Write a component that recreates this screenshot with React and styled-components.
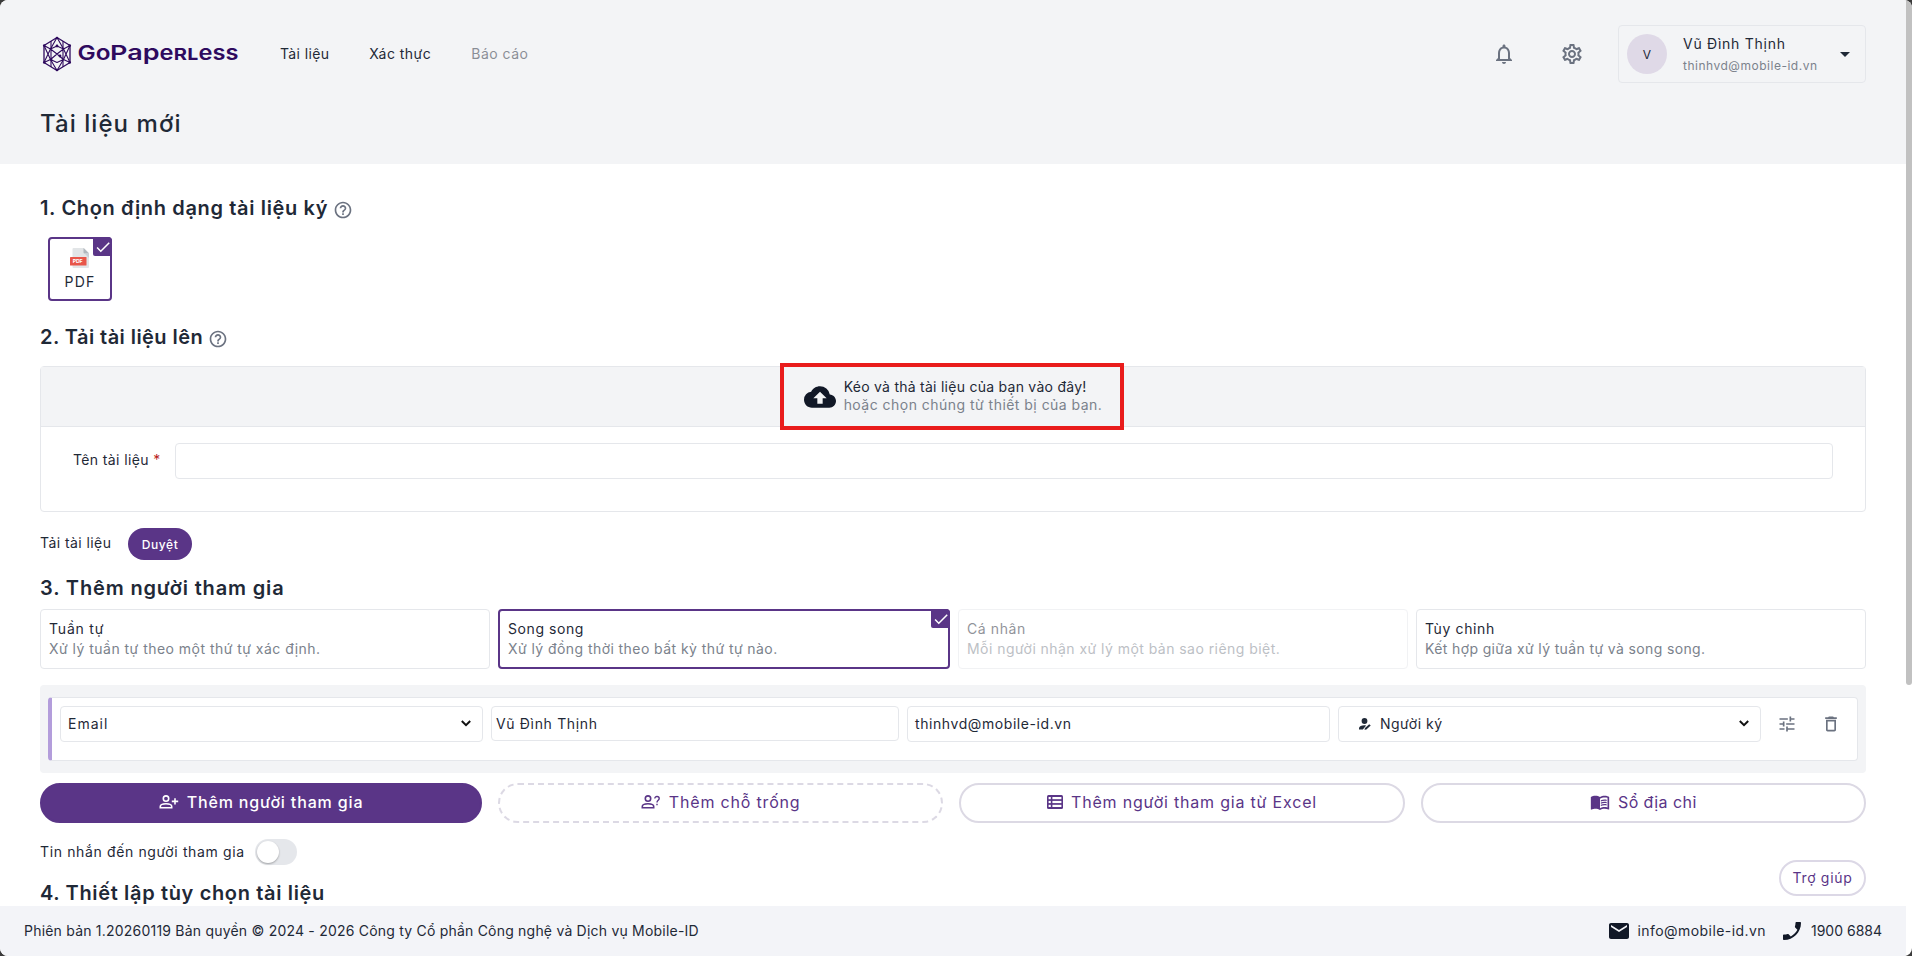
import React, { useState } from "react";
import styled, { createGlobalStyle } from "styled-components";
import {
    MdOutlineNotifications,
    MdOutlineSettings,
    MdArrowDropDown,
    MdHelpOutline,
    MdCheck,
    MdCloudUpload,
    MdTune,
    MdDeleteOutline,
    MdEmail,
    MdPhone,
    MdMenuBook,
} from "react-icons/md";

const navItems = [
    { label: "Tài liệu", spacing: 0.36 },
    { label: "Xác thực", spacing: 0.48 },
    { label: "Báo cáo", spacing: 0.48, disabled: true },
]

const flows = [
    { id: "sequential", title: "Tuần tự", titleSpacing: 0.8, text: "Xử lý tuần tự theo một thứ tự xác định.", spacing: 0.47 },
    { id: "parallel", title: "Song song", titleSpacing: 0.58, text: "Xử lý đồng thời theo bất kỳ thứ tự nào.", spacing: 0.43 },
    { id: "individual", title: "Cá nhân", titleSpacing: 0.6, text: "Mỗi người nhận xử lý một bản sao riêng biệt.", spacing: 0.45, disabled: true },
    { id: "custom", title: "Tùy chỉnh", titleSpacing: 0.62, text: "Kết hợp giữa xử lý tuần tự và song song.", spacing: 0.37 },
]

const LogoMark = () => (
    <svg width="34" height="36" viewBox="0 0 34 36" fill="none" stroke="#2e0a5e" strokeWidth="1.1" strokeLinejoin="round">
        <path d="M17 1.5 30 9.5V26.5L17 34.5 4 26.5V9.5Z" strokeWidth="1.3" />
        <path d="M17 1.5 10.5 13 4 9.5M17 1.5 23.5 13 30 9.5M10.5 13 4 26.5M23.5 13 30 26.5M4 9.5 10.5 23.5 17 34.5 23.5 23.5 30 9.5M4 26.5 10.5 23.5M30 26.5 23.5 23.5" />
        <path d="M11 5V31M23 5V31M10.5 13 17 10 23.5 13 17 18ZM10.5 23.5 17 18 23.5 23.5 17 26.5Z" />
        <g fill="#2e0a5e" stroke="none">
            <circle cx="17" cy="2" r="1.2" />
            <circle cx="4.2" cy="9.5" r="1.2" />
            <circle cx="29.8" cy="9.5" r="1.2" />
            <circle cx="4.2" cy="26.5" r="1.2" />
            <circle cx="29.8" cy="26.5" r="1.2" />
            <circle cx="17" cy="34" r="1.2" />
            <circle cx="17" cy="10" r="1.4" />
            <circle cx="20" cy="20" r="1.4" />
            <circle cx="11" cy="23.5" r="1.2" />
        </g>
    </svg>
)

const PdfIcon = () => (
    <svg width="20" height="20" viewBox="0 0 20 20">
        <path d="M3.5 0H14l5 5v14a1 1 0 0 1-1 1H3.5a1 1 0 0 1-1-1V1a1 1 0 0 1 1-1Z" fill="#e2e5e7" />
        <path d="M13.5 0 19 5.5H14.5a1 1 0 0 1-1-1Z" fill="#b0b7bd" />
        <path d="M14.5 5.5H19V10Z" fill="#cad1d8" />
        <rect x="0" y="9" width="16.5" height="8.5" rx=".6" fill="#e8564a" />
        <text x="8.2" y="15.3" fontSize="5.2" fontWeight="700" fill="#fff" textAnchor="middle" textLength="11">PDF</text>
    </svg>
)

const PersonIcon = ({ children }) => (
    <svg width="20" height="16" viewBox="0 0 20 16" fill="none" stroke="currentColor" strokeWidth="1.6">
        <circle cx="7" cy="4.6" r="2.7" />
        <path d="M1.3 13.7V12.5C1.3 10.7 4.4 9.8 7 9.8S12.7 10.7 12.7 12.5V13.7Z" />
        {children}
    </svg>
)

const TableIcon = () => (
    <svg width="16" height="14" viewBox="0 0 16 14">
        <rect width="16" height="14" rx="1.5" fill="currentColor" />
        <g fill="#fff">
            <rect x="1.6" y="2" width="2.2" height="2.2" />
            <rect x="1.6" y="5.9" width="2.2" height="2.2" />
            <rect x="1.6" y="9.8" width="2.2" height="2.2" />
            <rect x="5.4" y="2" width="9" height="2.2" />
            <rect x="5.4" y="5.9" width="9" height="2.2" />
            <rect x="5.4" y="9.8" width="9" height="2.2" />
        </g>
    </svg>
)

const SignerIcon = () => (
    <svg width="14" height="14" viewBox="0 0 14 14" fill="#1f2937">
        <circle cx="6.5" cy="4" r="2.9" />
        <path d="M1 12.5V11.2C1 9.3 3.5 8.3 6.5 8.3L8.2 8.5 4.8 12.5Z" />
        <path d="M6.5 12.8 7 11 11.2 7.2 12.7 8.6 8.4 12.4Z" />
    </svg>
)

const Chevron = () => (
    <svg width="10" height="7" viewBox="0 0 10 7" fill="none" stroke="#111" strokeWidth="2">
        <path d="M.8 1 5 5.2 9.2 1" />
    </svg>
)

const App = () => {
    const [selected, setSelected] = useState("parallel")

    return (
        <>
            <GlobalStyle />
            <Page>
                <Header>
                    <TopBar>
                        <Brand>
                            <LogoMark />
                            <svg width="162" height="26" viewBox="0 0 162 26">
                                <text y="19.3" fontSize="20.6" fontWeight="600" fill="#2e0a5e">
                                    <tspan x="-.5" textLength="33" lengthAdjust="spacingAndGlyphs">Go</tspan>
                                    <tspan x="32" textLength="49.5" lengthAdjust="spacingAndGlyphs">Pap</tspan>
                                    <tspan x="81.5" textLength="79" lengthAdjust="spacingAndGlyphs" fontVariant="small-caps">erless</tspan>
                                </text>
                            </svg>
                        </Brand>
                        <Nav>
                            {navItems.map(item => (
                                <NavLink key={item.label} $spacing={item.spacing} $disabled={item.disabled}>{item.label}</NavLink>
                            ))}
                        </Nav>
                        <Tools>
                            <MdOutlineNotifications size={24} />
                            <MdOutlineSettings size={24} />
                        </Tools>
                        <Account>
                            <Avatar>V</Avatar>
                            <div>
                                <AccountName>Vũ Đình Thịnh</AccountName>
                                <AccountMail>thinhvd@mobile-id.vn</AccountMail>
                            </div>
                            <MdArrowDropDown size={24} />
                        </Account>
                    </TopBar>
                    <Title>Tài liệu mới</Title>
                </Header>

                <Main>
                    <Heading $top={30} $spacing={0.65}>
                        1. Chọn định dạng tài liệu ký
                        <MdHelpOutline size={20} />
                    </Heading>
                    <FormatCard>
                        <PdfIcon />
                        PDF
                        <Badge><MdCheck size={18} /></Badge>
                    </FormatCard>

                    <Heading $top={22} $spacing={0.44}>
                        2. Tải tài liệu lên
                        <MdHelpOutline size={20} />
                    </Heading>
                    <Upload>
                        <DropZone>
                            <MdCloudUpload size={32} />
                            <DropText>
                                <Text $spacing={0.26} $line={18}>Kéo và thả tài liệu của bạn vào đây!</Text>
                                <Text $spacing={0.47} $line={18} $muted>hoặc chọn chúng từ thiết bị của bạn.</Text>
                            </DropText>
                            <Highlight />
                        </DropZone>
                        <NameField>
                            <Text $spacing={0.38}>Tên tài liệu <Required>*</Required></Text>
                            <NameInput />
                        </NameField>
                    </Upload>
                    <BrowseRow>
                        <Text $spacing={0.43}>Tải tài liệu</Text>
                        <BrowseButton>Duyệt</BrowseButton>
                    </BrowseRow>

                    <Heading $top={14} $spacing={0.85}>3. Thêm người tham gia</Heading>
                    <Flows>
                        {flows.map(flow => (
                            <FlowCard
                                key={flow.id}
                                $selected={flow.id === selected}
                                $disabled={flow.disabled}
                                onClick={() => !flow.disabled && setSelected(flow.id)}
                            >
                                <Text $spacing={flow.titleSpacing}>{flow.title}</Text>
                                <Text $spacing={flow.spacing} $muted>{flow.text}</Text>
                                {flow.id === selected && <Badge><MdCheck size={18} /></Badge>}
                            </FlowCard>
                        ))}
                    </Flows>

                    <Participants>
                        <Participant>
                            <Field $spacing={1}>Email<Chevron /></Field>
                            <Field $spacing={0.66} $short>Vũ Đình Thịnh</Field>
                            <Field $spacing={0.58}>thinhvd@mobile-id.vn</Field>
                            <Field $spacing={0.49} $icon>
                                <SignerIcon />
                                Người ký
                                <Chevron />
                            </Field>
                            <RowAction><MdTune size={20} /></RowAction>
                            <RowAction><MdDeleteOutline size={20} /></RowAction>
                        </Participant>
                    </Participants>

                    <Actions>
                        <ActionButton $spacing={0.85} $primary>
                            <PersonIcon><path d="M16 4.2V10.6M12.8 7.4H19.2" /></PersonIcon>
                            Thêm người tham gia
                        </ActionButton>
                        <ActionButton $spacing={0.82}>
                            <PersonIcon>
                                <path d="M13.8 4.6C13.8 1.6 18.2 1.9 18.2 4.5 18.2 6.3 16 6.2 16 8.5M16 9.7V11.2" strokeWidth="1.4" />
                            </PersonIcon>
                            Thêm chỗ trống
                        </ActionButton>
                        <ActionButton $spacing={0.8}>
                            <TableIcon />
                            Thêm người tham gia từ Excel
                        </ActionButton>
                        <ActionButton $spacing={0.42}>
                            <MdMenuBook size={20} />
                            Sổ địa chỉ
                        </ActionButton>
                    </Actions>

                    <MessageRow>
                        <Text $spacing={0.63}>Tin nhắn đến người tham gia</Text>
                        <Toggle />
                    </MessageRow>
                    <Heading $top={14} $spacing={0.65}>4. Thiết lập tùy chọn tài liệu</Heading>
                </Main>

                <Footer>
                    <Text $spacing={0.21}>Phiên bản 1.20260119 Bản quyền © 2024 - 2026 Công ty Cổ phần Công nghệ và Dịch vụ Mobile-ID</Text>
                    <Contact>
                        <MdEmail size={24} />
                        <Text $spacing={0.43}>info@mobile-id.vn</Text>
                        <PhoneIcon size={24} />
                        <Text $spacing={0}>1900 6884</Text>
                    </Contact>
                </Footer>
                <HelpButton>Trợ giúp</HelpButton>
                <Scrollbar />
            </Page>
        </>
    )
}

export default App;

const GlobalStyle = createGlobalStyle`
    *{
        box-sizing: border-box;
    }
    body{
        margin: 0;
        background: #3b3b3b;
        font-family: Inter, "Open Sans", sans-serif;
        font-size: 14px;
        color: #1f2937;
    }
    svg{
        flex-shrink: 0;
    }
`

const Page = styled.div`
    position: relative;
    display: flex;
    flex-direction: column;
    height: 956px;
    padding-right: 6px;
    background: #fff;
    border-radius: 8px;
    overflow: hidden;
`

const Header = styled.header`
    flex: none;
    height: 164px;
    padding: 0 40px;
    background: #f3f4f6;
`

const TopBar = styled.div`
    display: flex;
    align-items: center;
    height: 108px;
`

const Brand = styled.div`
    display: flex;
    align-items: center;
    gap: 4px;
    width: 240px;

    text{
        font-family: Inter, sans-serif;
    }
`

const Nav = styled.nav`
    display: flex;
    gap: 40px;
`

const NavLink = styled.a`
    line-height: 20px;
    letter-spacing: ${p => p.$spacing}px;
    opacity: ${p => p.$disabled ? 0.5 : 1};
`

const Tools = styled.div`
    display: flex;
    gap: 44px;
    margin-left: auto;
    margin-right: 34px;
    color: #6b7280;
`

const Account = styled.div`
    display: flex;
    align-items: center;
    width: 248px;
    height: 58px;
    padding: 0 8px;
    border: 1px solid #e5e7eb;
    border-radius: 4px;

    > svg{
        margin-left: auto;
    }
`

const Avatar = styled.div`
    display: flex;
    justify-content: center;
    align-items: center;
    width: 40px;
    height: 40px;
    margin-right: 16px;
    border-radius: 50%;
    background: #dfd9e7;
    font-size: 12px;
`

const AccountName = styled.div`
    line-height: 22px;
    letter-spacing: 0.74px;
`

const AccountMail = styled.div`
    padding-top: 1px;
    font-size: 12px;
    line-height: 20px;
    letter-spacing: 0.51px;
    color: #7b828c;
`

const Title = styled.h1`
    margin: 0;
    padding-top: 1px;
    font-size: 24px;
    font-weight: 500;
    line-height: 30px;
    letter-spacing: 1.06px;
`

const Main = styled.main`
    flex: 1;
    min-height: 0;
    padding: 0 40px;
    overflow: hidden;
`

const Heading = styled.h2`
    display: flex;
    align-items: center;
    gap: 5px;
    margin: ${p => p.$top}px 0 0;
    font-size: 20px;
    font-weight: 600;
    line-height: 28px;
    letter-spacing: ${p => p.$spacing}px;

    svg{
        margin-top: 4px;
        color: #6b7280;
    }
`

const Text = styled.div`
    line-height: ${p => p.$line || 20}px;
    letter-spacing: ${p => p.$spacing}px;
    color: ${p => p.$muted ? "#7b828c" : "#1f2937"};
    white-space: nowrap;
`

const FormatCard = styled.div`
    position: relative;
    display: flex;
    flex-direction: column;
    align-items: center;
    gap: 4px;
    width: 64px;
    height: 64px;
    margin: 15px 0 0 8px;
    padding-top: 9px;
    border: 2px solid #5a3587;
    border-radius: 4px;
    line-height: 20px;
    letter-spacing: 1.2px;
`

const Badge = styled.span`
    position: absolute;
    top: -2px;
    right: -2px;
    display: flex;
    justify-content: center;
    align-items: center;
    width: 19px;
    height: 19px;
    border-radius: 0 4px 0 2px;
    background: #5a3587;
    color: #fff;
`

const Upload = styled.div`
    height: 146px;
    margin-top: 15px;
    border: 1px solid #e5e7eb;
    border-radius: 4px;
`

const DropZone = styled.div`
    position: relative;
    display: flex;
    justify-content: center;
    align-items: center;
    gap: 8px;
    height: 60px;
    border-bottom: 1px solid #e5e7eb;
    background: #f3f4f6;
    color: #111827;
`

const DropText = styled.div`
    padding-bottom: 2px;
`

const Highlight = styled.div`
    position: absolute;
    top: -4px;
    left: calc(50% - 173px);
    width: 344px;
    height: 67px;
    border: 4px solid #e91c1c;
`

const NameField = styled.div`
    display: grid;
    grid-template-columns: 102px 1fr;
    padding: 16px 32px;

    > div{
        margin-top: 7px;
    }
`

const Required = styled.span`
    color: #b91c1c;
`

const NameInput = styled.input`
    height: 36px;
    border: 1px solid #e5e7eb;
    border-radius: 4px;
    outline: none;
`

const BrowseRow = styled.div`
    display: flex;
    margin-top: 16px;

    > div{
        width: 88px;
        margin-top: 5px;
    }
`

const BrowseButton = styled.button`
    width: 64px;
    height: 32px;
    padding: 0;
    border: none;
    border-radius: 16px;
    background: #5a3587;
    color: #fff;
    font: 500 12px Inter, sans-serif;
    letter-spacing: 0.6px;
`

const Flows = styled.div`
    display: grid;
    grid-template-columns: 450px 452px 1fr 1fr;
    gap: 8px;
    margin-top: 7px;
`

const FlowCard = styled.div`
    position: relative;
    height: 60px;
    padding: ${p => p.$selected ? "8px" : "9px 8px"};
    border: ${p => p.$selected ? "2px solid #5a3587" : "1px solid #e5e7eb"};
    border-radius: 4px;
    opacity: ${p => p.$disabled ? 0.5 : 1};
`

const Participants = styled.div`
    margin-top: 16px;
    padding: 12px 8px;
    border-radius: 4px;
    background: #f3f4f6;
`

const Participant = styled.div`
    display: grid;
    grid-template-columns: 1fr 408px 1fr 1fr 36px 36px;
    gap: 8px;
    height: 64px;
    padding: 8px;
    border: 1px solid #e5e7eb;
    border-left: 4px solid #b39ddb;
    border-radius: 4px;
    background: #fff;
`

const Field = styled.div`
    display: flex;
    align-items: center;
    gap: 8px;
    height: ${p => p.$short ? 35 : 36}px;
    padding: 0 11px 1px ${p => p.$short ? 4 : p.$icon ? 19 : 7}px;
    border: 1px solid #e5e7eb;
    border-radius: 4px;
    letter-spacing: ${p => p.$spacing}px;

    svg:last-child{
        margin-left: auto;
    }
`

const RowAction = styled.span`
    display: flex;
    justify-content: center;
    align-items: center;
    height: 36px;
    color: #6b7280;
`

const Actions = styled.div`
    display: grid;
    grid-template-columns: 442px 1fr 1fr 1fr;
    gap: 16px;
    margin-top: 10px;
`

const ActionButton = styled.button`
    display: flex;
    justify-content: center;
    align-items: center;
    gap: 8px;
    height: 40px;
    padding: 0 0 2px;
    border: 2px solid ${p => p.$primary ? "#5a3587" : "#dcd9e4"};
    border-radius: 20px;
    background: ${p => p.$primary ? "#5a3587" : "#fff"};
    color: ${p => p.$primary ? "#fff" : "#5a3587"};
    font: ${p => p.$primary ? 500 : 400} 16px Inter, sans-serif;
    letter-spacing: ${p => p.$spacing}px;

    &:nth-child(2){
        border-style: dashed;
    }
`

const MessageRow = styled.div`
    display: flex;
    align-items: center;
    height: 26px;
    margin-top: 16px;

    > div:first-child{
        width: 215px;
    }
`

const Toggle = styled.div`
    display: flex;
    width: 42px;
    height: 26px;
    padding: 2px;
    border-radius: 13px;
    background: #e5e7eb;

    &::before{
        content: "";
        width: 22px;
        height: 22px;
        border-radius: 50%;
        background: #fff;
        box-shadow: 0 1px 2px rgba(0, 0, 0, 0.3);
    }
`

const Footer = styled.footer`
    display: flex;
    justify-content: space-between;
    align-items: center;
    flex: none;
    height: 50px;
    padding: 0 24px;
    background: #f3f4f8;
`

const Contact = styled.div`
    display: flex;
    align-items: center;
    gap: 7px;
    color: #111827;
`

const PhoneIcon = styled(MdPhone)`
    margin-left: 7px;
    transform: scaleX(-1);
`

const HelpButton = styled.button`
    position: absolute;
    right: 46px;
    bottom: 60px;
    width: 87px;
    height: 36px;
    padding: 0 0 1px;
    border: 2px solid #dcd8e6;
    border-radius: 18px;
    background: #fff;
    color: #5a3587;
    font: 400 14px Inter, sans-serif;
    letter-spacing: 0.7px;
`

const Scrollbar = styled.div`
    position: absolute;
    top: 0;
    right: 0;
    width: 6px;
    height: 685px;
    border-radius: 0 0 3px 3px;
    background: #c1c1c1;
`
